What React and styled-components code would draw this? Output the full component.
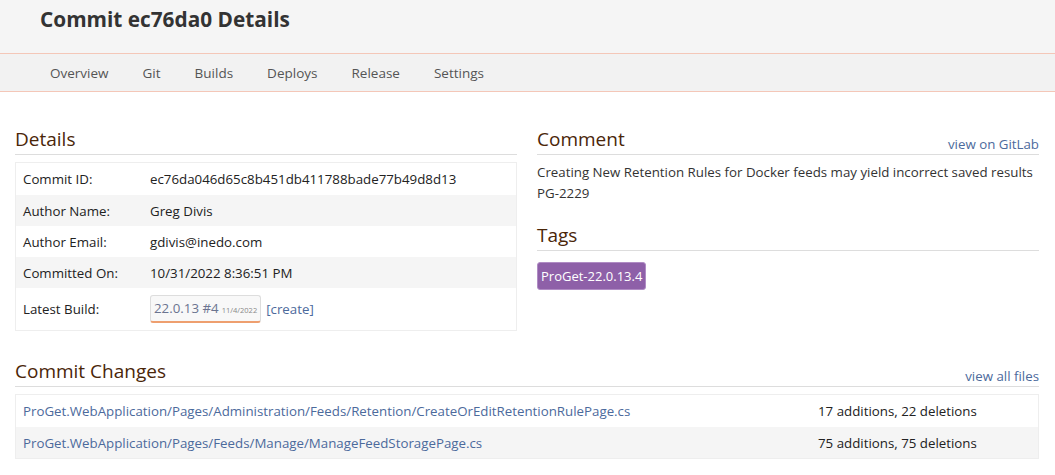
import React from 'react';
import styled, { createGlobalStyle } from 'styled-components';

const GlobalStyle = createGlobalStyle`
    body {
        margin: 0;
        background: #fff;
        font-family: "Open Sans", "Noto Sans", sans-serif;
        font-size: 13.3px;
        color: #333;
    }
`

const Header = styled.div`
    background: #f5f5f5;
    height: 53px;
    padding-left: 40px;
    border-bottom: 1px solid #f4c7b8;
`

const Title = styled.h1`
    margin: 0;
    padding-top: 5px;
    font-size: 20.8px;
    font-weight: 700;
    color: #333;
    line-height: 28px;
`

const Nav = styled.nav`
    display: flex;
    background: #f2f2f2;
    height: 37px;
    padding-left: 33px;
    border-bottom: 1px solid #f4c7b8;
`

const NavItem = styled.a`
    display: flex;
    align-items: center;
    padding: 0 17px;
    color: #555;
    font-size: 13.5px;
    text-decoration: none;
`

const Content = styled.div`
    padding: 30px 16px 0 15px;
`

const Columns = styled.div`
    display: grid;
    grid-template-columns: 1fr 1fr;
    gap: 20px;
`

const SectionHead = styled.div`
    display: flex;
    justify-content: space-between;
    align-items: flex-end;
    border-bottom: 1px solid #ddd;
    height: 32px;
    margin-bottom: ${props => props.gap || 7}px;
`

const SectionTitle = styled.h2`
    margin: 0;
    font-size: 19px;
    font-weight: 400;
    color: #4a2609;
    line-height: 30px;
`

const HeadLink = styled.a`
    color: #4c6a9c;
    font-size: 13.3px;
    text-decoration: none;
    line-height: 20px;
`

const Table = styled.div`
    border: 1px solid #eee;
`

const Row = styled.div`
    display: grid;
    grid-template-columns: ${props => props.cols};
    align-items: center;
    height: ${props => props.h || 31}px;
    padding: 0 7px;
    background: ${props => props.alt ? '#f5f5f5' : '#fff'};
`

const Label = styled.span`
    color: #222;
`

const Value = styled.span`
    color: #222;
    display: flex;
    align-items: center;
    gap: 5px;
`

const BuildBadge = styled.span`
    display: inline-flex;
    align-items: baseline;
    gap: 3px;
    padding: 3px 3px 4px;
    background: #f8f8f8;
    border: 1px solid #ddd;
    border-bottom: 2px solid #ee9f6f;
    border-radius: 3px;
    color: #6b7490;
`

const BadgeDate = styled.small`
    font-size: 7.5px;
    color: #888;
`

const Link = styled.a`
    color: #4c6a9c;
    text-decoration: none;
`

const CommentText = styled.p`
    margin: 0;
    line-height: 21px;
    color: #333;
`

const TagsSection = styled.div`
    margin-top: 14px;
`

const Tag = styled.span`
    display: inline-block;
    background: #8e60a8;
    color: #fff;
    border: 1px solid #b08cc4;
    border-radius: 3px;
    padding: 4px 3px 4px;
    font-size: 13px;
    line-height: 18px;
`

const ChangesSection = styled.div`
    margin-top: 23px;
`

function App() {
    const details = [
        ['Commit ID:', 'ec76da046d65c8b451db411788bade77b49d8d13'],
        ['Author Name:', 'Greg Divis'],
        ['Author Email:', 'gdivis@inedo.com'],
        ['Committed On:', '10/31/2022 8:36:51 PM'],
    ]

    const changes = [
        ['ProGet.WebApplication/Pages/Administration/Feeds/Retention/CreateOrEditRetentionRulePage.cs', '17 additions, 22 deletions'],
        ['ProGet.WebApplication/Pages/Feeds/Manage/ManageFeedStoragePage.cs', '75 additions, 75 deletions'],
    ]

    return (
        <>
            <GlobalStyle />
            <Header>
                <Title>Commit ec76da0 Details</Title>
            </Header>
            <Nav>
                {['Overview', 'Git', 'Builds', 'Deploys', 'Release', 'Settings'].map(n => (
                    <NavItem key={n}>{n}</NavItem>
                ))}
            </Nav>
            <Content>
                <Columns>
                    <div>
                        <SectionHead>
                            <SectionTitle>Details</SectionTitle>
                        </SectionHead>
                        <Table>
                            {details.map(([l, v], i) => (
                                <Row key={l} cols="127px 1fr" alt={i % 2 === 1} h={i === 0 ? 32 : 31}>
                                    <Label>{l}</Label>
                                    <Value>{v}</Value>
                                </Row>
                            ))}
                            <Row cols="127px 1fr" h={42}>
                                <Label>Latest Build:</Label>
                                <Value>
                                    <BuildBadge>22.0.13 #4 <BadgeDate>11/4/2022</BadgeDate></BuildBadge>
                                    <Link>[create]</Link>
                                </Value>
                            </Row>
                        </Table>
                    </div>
                    <div>
                        <SectionHead>
                            <SectionTitle>Comment</SectionTitle>
                            <HeadLink>view on GitLab</HeadLink>
                        </SectionHead>
                        <CommentText>
                            Creating New Retention Rules for Docker feeds may yield incorrect saved results<br />
                            PG-2229
                        </CommentText>
                        <TagsSection>
                            <SectionHead gap={11}>
                                <SectionTitle>Tags</SectionTitle>
                            </SectionHead>
                            <Tag>ProGet-22.0.13.4</Tag>
                        </TagsSection>
                    </div>
                </Columns>
                <ChangesSection>
                    <SectionHead>
                        <SectionTitle>Commit Changes</SectionTitle>
                        <HeadLink>view all files</HeadLink>
                    </SectionHead>
                    <Table>
                        {changes.map(([f, s], i) => (
                            <Row key={f} cols="795px 1fr" alt={i % 2 === 1} h={i === 0 ? 32 : 31}>
                                <Link>{f}</Link>
                                <Value>{s}</Value>
                            </Row>
                        ))}
                    </Table>
                </ChangesSection>
            </Content>
        </>
    )
}

export default App;
